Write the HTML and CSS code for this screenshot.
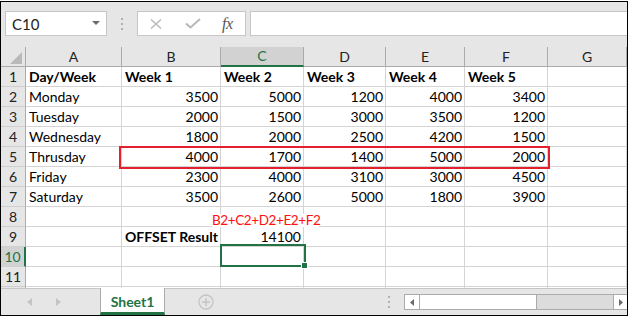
FILE: index.html
```html
<!DOCTYPE html>
<html>
<head>
    <meta charset="UTF-8">
    <title>OFFSET Result</title>
    <link rel="stylesheet" href="styles.css">
</head>
<body>
    <div class="excel">
        <div class="formula-bar">
            <div class="name-box">
                <span>C10</span>
                <svg class="caret" width="8" height="4" viewBox="0 0 8 4"><path d="M0 0H8L4 4Z" fill="#6a6a6a"/></svg>
            </div>
            <div class="grip"><i></i><i></i><i></i></div>
            <div class="fx-buttons">
                <svg class="ico-x" width="12" height="10" viewBox="0 0 12 10"><path d="M1 0.5L11 9.5M11 0.5L1 9.5" stroke="#b8b8b8" stroke-width="1.4" fill="none"/></svg>
                <svg class="ico-ok" width="16" height="11" viewBox="0 0 16 11"><path d="M1 5.5L5.5 9.5L15 1" stroke="#b8b8b8" stroke-width="2" fill="none"/></svg>
                <span class="fx">fx</span>
            </div>
            <div class="fx-input"></div>
        </div>

        <div class="sheet">
            <div class="row head">
                <div class="cell corner"><span class="tri"></span></div>
                <div class="cell">A</div>
                <div class="cell">B</div>
                <div class="cell sel">C</div>
                <div class="cell">D</div>
                <div class="cell">E</div>
                <div class="cell">F</div>
                <div class="cell">G</div>
            </div>
            <div class="row">
                <div class="cell rh">1</div>
                <div class="cell b">Day/Week</div>
                <div class="cell b">Week 1</div>
                <div class="cell b">Week 2</div>
                <div class="cell b">Week 3</div>
                <div class="cell b">Week 4</div>
                <div class="cell b">Week 5</div>
                <div class="cell"></div>
            </div>
            <div class="row">
                <div class="cell rh">2</div>
                <div class="cell">Monday</div>
                <div class="cell n">3500</div>
                <div class="cell n">5000</div>
                <div class="cell n">1200</div>
                <div class="cell n">4000</div>
                <div class="cell n">3400</div>
                <div class="cell"></div>
            </div>
            <div class="row">
                <div class="cell rh">3</div>
                <div class="cell">Tuesday</div>
                <div class="cell n">2000</div>
                <div class="cell n">1500</div>
                <div class="cell n">3000</div>
                <div class="cell n">3500</div>
                <div class="cell n">1200</div>
                <div class="cell"></div>
            </div>
            <div class="row">
                <div class="cell rh">4</div>
                <div class="cell">Wednesday</div>
                <div class="cell n">1800</div>
                <div class="cell n">2000</div>
                <div class="cell n">2500</div>
                <div class="cell n">4200</div>
                <div class="cell n">1500</div>
                <div class="cell"></div>
            </div>
            <div class="row">
                <div class="cell rh">5</div>
                <div class="cell">Thrusday</div>
                <div class="cell n">4000</div>
                <div class="cell n">1700</div>
                <div class="cell n">1400</div>
                <div class="cell n">5000</div>
                <div class="cell n">2000</div>
                <div class="cell"></div>
            </div>
            <div class="row">
                <div class="cell rh">6</div>
                <div class="cell">Friday</div>
                <div class="cell n">2300</div>
                <div class="cell n">4000</div>
                <div class="cell n">3100</div>
                <div class="cell n">3000</div>
                <div class="cell n">4500</div>
                <div class="cell"></div>
            </div>
            <div class="row">
                <div class="cell rh">7</div>
                <div class="cell">Saturday</div>
                <div class="cell n">3500</div>
                <div class="cell n">2600</div>
                <div class="cell n">5000</div>
                <div class="cell n">1800</div>
                <div class="cell n">3900</div>
                <div class="cell"></div>
            </div>
            <div class="row">
                <div class="cell rh">8</div>
                <div class="cell"></div>
                <div class="cell"></div>
                <div class="cell"></div>
                <div class="cell"></div>
                <div class="cell"></div>
                <div class="cell"></div>
                <div class="cell"></div>
            </div>
            <div class="row">
                <div class="cell rh">9</div>
                <div class="cell"></div>
                <div class="cell b">OFFSET Result</div>
                <div class="cell n">14100</div>
                <div class="cell"></div>
                <div class="cell"></div>
                <div class="cell"></div>
                <div class="cell"></div>
            </div>
            <div class="row">
                <div class="cell rh sel">10</div>
                <div class="cell"></div>
                <div class="cell"></div>
                <div class="cell"></div>
                <div class="cell"></div>
                <div class="cell"></div>
                <div class="cell"></div>
                <div class="cell"></div>
            </div>
            <div class="row">
                <div class="cell rh">11</div>
                <div class="cell"></div>
                <div class="cell"></div>
                <div class="cell"></div>
                <div class="cell"></div>
                <div class="cell"></div>
                <div class="cell"></div>
                <div class="cell"></div>
            </div>
            <div class="row">
                <div class="cell rh"></div>
                <div class="cell"></div>
                <div class="cell"></div>
                <div class="cell"></div>
                <div class="cell"></div>
                <div class="cell"></div>
                <div class="cell"></div>
                <div class="cell"></div>
            </div>

            <!-- overlays: highlight box, text box, active cell -->
            <div class="highlight"></div>
            <div class="note">B2+C2+D2+E2+F2</div>
            <div class="active"><span class="handle"></span></div>
        </div>

        <div class="tab-bar">
            <div class="nav">
                <svg width="5" height="8" viewBox="0 0 5 8"><path d="M5 0V8L0 4Z" fill="#c4c4c4"/></svg>
                <svg width="5" height="8" viewBox="0 0 5 8"><path d="M0 0V8L5 4Z" fill="#c4c4c4"/></svg>
            </div>
            <div class="tab">Sheet1</div>
            <svg class="add" width="16" height="16" viewBox="0 0 16 16">
                <circle cx="8" cy="8" r="7" stroke="#c4c4c4" stroke-width="1.3" fill="none"/>
                <path d="M8 4V12M4 8H12" stroke="#c4c4c4" stroke-width="1.5"/>
            </svg>
            <div class="grip tab-grip"><i></i><i></i><i></i></div>
            <div class="hscroll">
                <div class="sb-btn"><svg width="4" height="7" viewBox="0 0 4 7"><path d="M4 0V7L0 3.5Z" fill="#6a6a6a"/></svg></div>
                <div class="thumb"></div>
                <div class="track"></div>
                <div class="sb-btn"><svg width="4" height="7" viewBox="0 0 4 7"><path d="M0 0V7L4 3.5Z" fill="#6a6a6a"/></svg></div>
            </div>
        </div>
    </div>
</body>
</html>
```

FILE: styles.css
```css
* {
    box-sizing: border-box;
}
body {
    margin: 0;
    padding-top: 1px;
    font-family: Lato, 'Liberation Sans', sans-serif;
    font-size: 14px;
    color: #000;
    background: #fff;
}
.excel {
    --cols: 25px 96px 99px 83px 82px 79px 83px 79px;
    width: 628px;
    height: 315px;
    border: 1px solid #000;
    background: #e6e6e6;
    overflow: hidden;
}

/* formula bar */
.formula-bar {
    height: 45px;
    display: flex;
    align-items: flex-start;
    padding: 9px 0 0 4px;
}
.name-box {
    width: 102px;
    height: 25px;
    background: #fff;
    border: 1px solid #c6c6c6;
    display: flex;
    align-items: center;
    justify-content: space-between;
    padding: 0 6px 0 6px;
    font-size: 15px;
    color: #222;
}
.caret {
    margin-top: -1px;
}
.grip {
    display: flex;
    flex-direction: column;
    gap: 3px;
    margin: 7px 14px 0 14px;
}
.grip i {
    display: block;
    width: 2px;
    height: 2px;
    background: #b0b0b0;
}
.fx-buttons {
    width: 109px;
    height: 25px;
    background: #fff;
    border: 1px solid #c6c6c6;
    display: flex;
    align-items: center;
    padding-left: 12px;
}
.ico-ok {
    margin-left: 23px;
}
.fx {
    margin-left: 21px;
    font-family: 'Liberation Serif', serif;
    font-style: italic;
    font-size: 16px;
    color: #555;
    letter-spacing: -0.5px;
}
.fx-input {
    flex: 1;
    height: 25px;
    margin-left: 4px;
    background: #fff;
    border: 1px solid #c6c6c6;
    border-right: none;
}

/* grid */
.sheet {
    position: relative;
    height: 241px;
    background: #fff;
    overflow: hidden;
}
.row {
    display: grid;
    grid-template-columns: var(--cols);
    height: 20px;
}
.cell {
    border-right: 1px solid #d4d4d4;
    border-bottom: 1px solid #d4d4d4;
    padding: 0 3px;
    line-height: 19px;
    white-space: nowrap;
}
.cell.b {
    font-weight: bold;
}
.cell.n {
    text-align: right;
    padding-right: 2px;
}
.head .cell {
    background: #e6e6e6;
    border-right-color: #ababab;
    border-bottom-color: #ababab;
    text-align: center;
    font-size: 14px;
    color: #222;
}
.head .cell.sel {
    background: #d2d2d2;
    color: #217346;
    border-bottom: 2px solid #217346;
    line-height: 18px;
}
.corner {
    position: relative;
}
.tri {
    position: absolute;
    right: 3px;
    bottom: 2px;
    width: 0;
    height: 0;
    border-left: 12px solid transparent;
    border-bottom: 12px solid #b9b9b9;
}
.cell.rh {
    background: #e6e6e6;
    border-right-color: #ababab;
    border-bottom-color: #cfcfcf;
    text-align: center;
    padding: 0;
    color: #222;
}
.cell.rh.sel {
    background: #d2d2d2;
    color: #217346;
    border-right: 2px solid #217346;
}

.highlight {
    position: absolute;
    left: 118px;
    top: 99px;
    width: 431px;
    height: 23px;
    border: 2px solid #e5202e;
}
.note {
    position: absolute;
    left: 211px;
    top: 167px;
    width: 107px;
    height: 13px;
    background: #fff;
    color: #ff1010;
    font-size: 13.5px;
    letter-spacing: -0.4px;
    text-align: center;
    line-height: 13px;
    white-space: nowrap;
}
.active {
    position: absolute;
    left: 219px;
    top: 197px;
    width: 86px;
    height: 23px;
    border: 2px solid #217346;
}
.handle {
    position: absolute;
    right: -4px;
    bottom: -4px;
    width: 7px;
    height: 7px;
    background: #217346;
    border: 1px solid #fff;
}

/* sheet tabs + scrollbar */
.tab-bar {
    height: 27px;
    border-top: 1px solid #c6c6c6;
    display: flex;
    align-items: center;
}
.nav {
    width: 99px;
    display: flex;
    gap: 24px;
    padding-left: 26px;
    align-self: center;
}
.tab {
    align-self: stretch;
    margin-top: -1px;
    width: 65px;
    background: #fff;
    border-left: 1px solid #ababab;
    border-right: 1px solid #ababab;
    border-bottom: 3px solid #217346;
    color: #217346;
    font-weight: bold;
    text-align: center;
    line-height: 27px;
}
.add {
    margin-left: 33px;
}
.tab-grip {
    margin: 0 14px 0 174px;
}
.hscroll {
    flex: 1;
    height: 16px;
    display: flex;
    border: 1px solid #ababab;
    border-right: none;
    background: #dcdcdc;
}
.sb-btn {
    width: 14px;
    background: #fff;
    display: flex;
    align-items: center;
    justify-content: center;
}
.thumb {
    width: 118px;
    background: #fff;
    border-left: 1px solid #ababab;
    border-right: 1px solid #ababab;
}
.track {
    flex: 1;
}
.hscroll .sb-btn:last-child {
    border-left: 1px solid #ababab;
}
```
